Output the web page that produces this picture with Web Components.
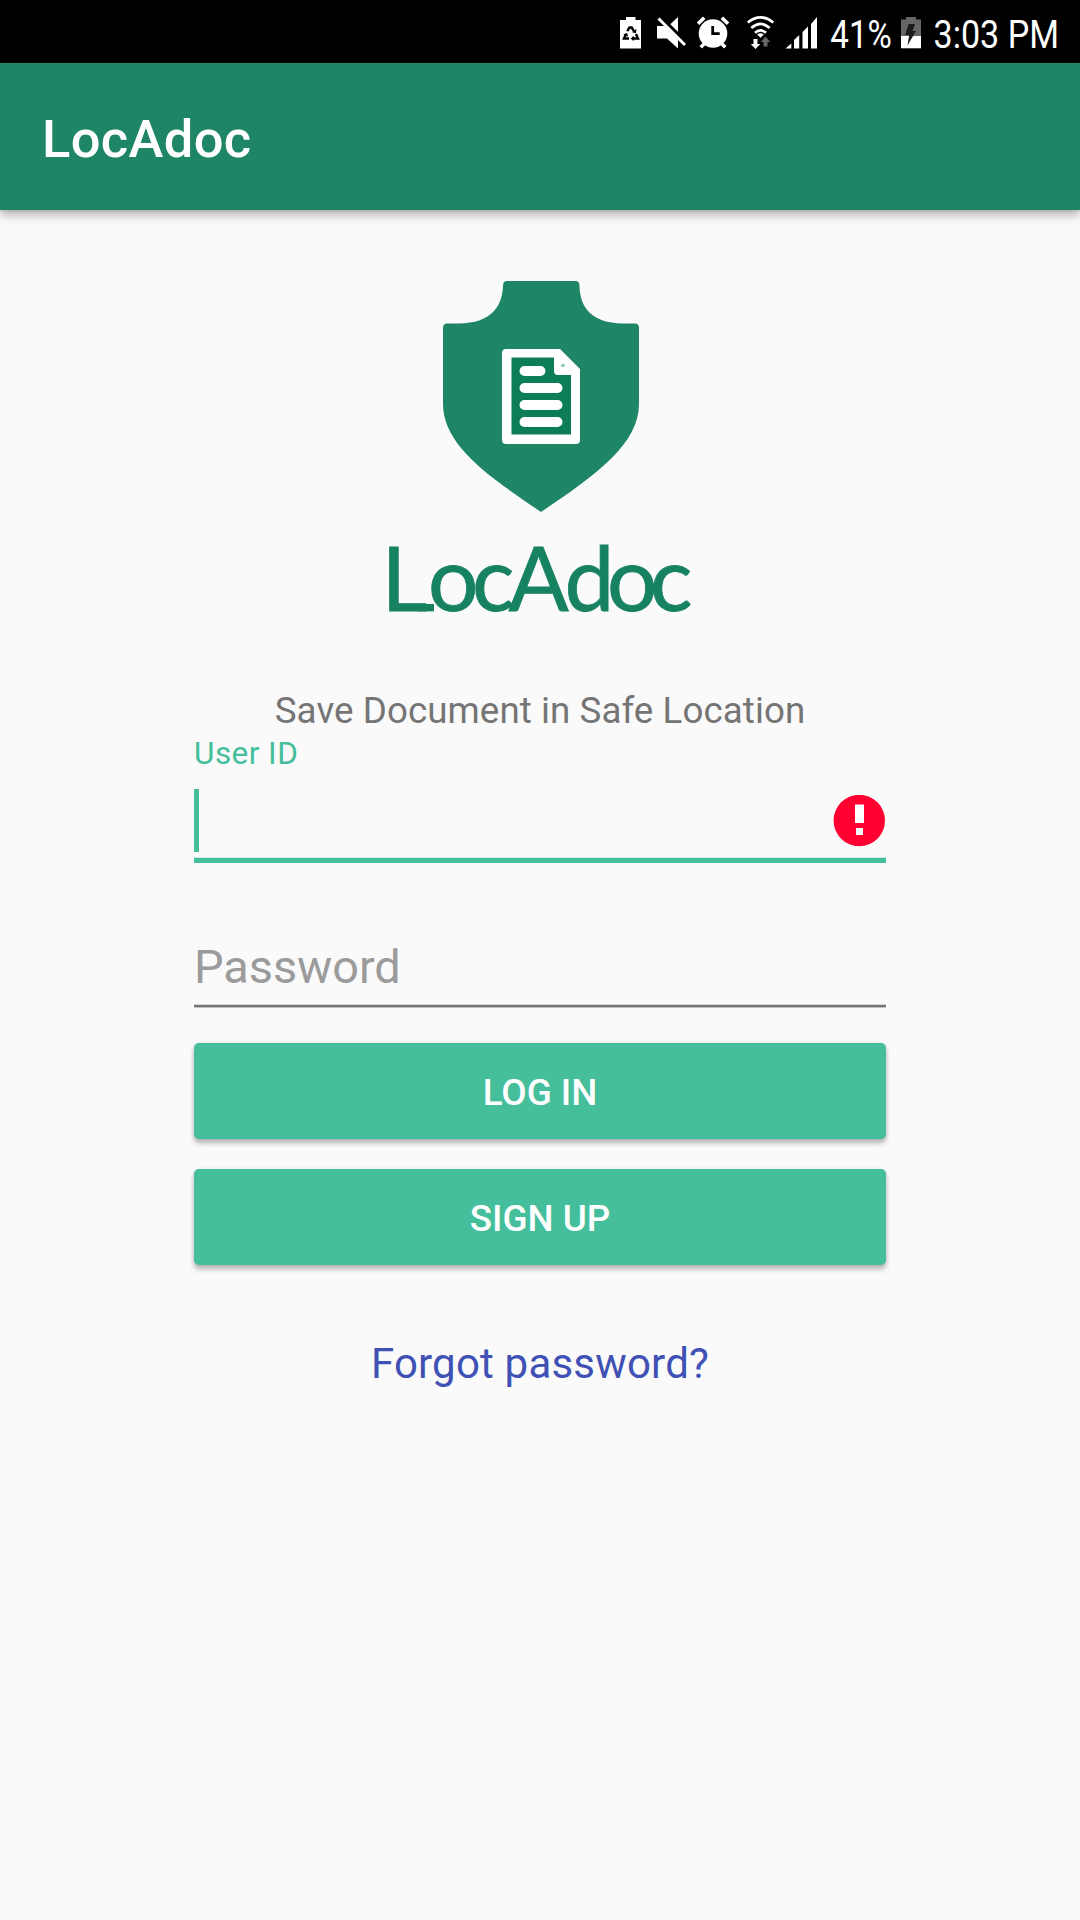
<!DOCTYPE html>
<html lang="en">
<head>
<meta charset="utf-8">
<title>LocAdoc</title>
<style>
html,body{margin:0;padding:0}
body{width:1080px;height:1920px;overflow:hidden;background:#fafafa;font-family:Roboto,"Noto Sans",sans-serif}
</style>
</head>
<body>
<login-screen></login-screen>
<script>
const define = (name, html) => customElements.define(name, class extends HTMLElement {
  connectedCallback() {
    if (this.shadowRoot) return;
    const t = document.createElement('template');
    t.innerHTML = html;
    this.attachShadow({mode: 'open'}).append(t.content.cloneNode(true));
  }
});

define('status-bar', `
<style>
:host{display:flex;align-items:flex-start;justify-content:flex-end;height:63px;background:#000;box-sizing:border-box;padding:14px 20px 0 0}
svg{display:block;flex:none;overflow:visible}
</style>
<svg width="22" height="36" viewBox="620 14 22 36" style="margin-right:14px">
  <path fill="#fff" d="M626 17h9.500v3H641v28.500H620V20h6z"/>
  <g fill="none" stroke="#000" stroke-width="2.400">
    <path d="M627.300 31.200l2.200-3.700h2.200l2.400 3.900"/>
    <path d="M636 34l2 4.500h-5"/>
    <path d="M629 38.500h-5l2-4.500"/>
  </g>
  <path d="M632 32.300l4.100.9.300-4.200zM633.600 35.800v5.400l-2.800-2.700zM623.200 34.600l4-1.700.9 3.800z"/>
</svg>
<svg width="30" height="36" viewBox="656 14 30 36" style="margin-right:11px">
  <path fill="#fff" d="M657 26h7.500l13.500 13.500V48.500L667 38.500H657zM678 17v15.500l-8-8z"/>
  <path stroke="#000" stroke-width="3" d="M661.500 17.500l25 25"/>
  <path stroke="#fff" stroke-width="3" d="M658.500 18.500l26.500 26.500"/>
</svg>
<svg width="32" height="36" viewBox="697 14 32 36" style="margin-right:18px">
  <circle cx="713" cy="33.500" r="14.300" fill="#fff"/>
  <path stroke="#fff" stroke-width="3.600" d="M698 23.800l6.200-6M728 23.800l-6.200-6M704 44l-3.300 3.300M722 44l3.300 3.300"/>
  <path fill="none" stroke="#000" stroke-width="2.800" d="M712.700 26v7.600h7"/>
</svg>
<svg width="28" height="36" viewBox="747 14 28 36" style="margin-right:10px">
  <g fill="none" stroke="#fff" stroke-width="2.700">
    <path d="M747.800 22.500Q760.500 12.300 773.300 22.500"/>
    <path d="M751.300 28Q760.500 19.800 769.700 28"/>
    <path d="M755 32.800Q760.500 28 766 32.800"/>
  </g>
  <path fill="#fff" d="M757.200 34.500q3.300-2.500 6.600 0l-3.300 3.300zM753.500 39h4v5h2.800l-4.800 5-4.800-5h2.800z"/>
  <path fill="#666" d="M763.500 46.500h4V42h2.800l-4.800-5.500-4.800 5.500h2.800z"/>
</svg>
<svg width="32" height="36" viewBox="785 14 32 36" style="margin-right:14px">
  <path fill="#fff" d="M785.500 48.500l5.800-5v5zM794 48.500v-8.500l5.200-5v13.500zM802.500 48.500v-16.500l5.500-5.500v22zM811 48.500v-24.500l6-7v31.500z"/>
</svg>
<svg width="60" height="36" viewBox="831 14 60 36" style="margin-right:10px">
  <text x="830.300" y="48" font-size="39" fill="#fff" textLength="61.500" lengthAdjust="spacingAndGlyphs">41%</text>
</svg>
<svg width="20" height="36" viewBox="901 14 20 36" style="margin-right:14px">
  <path fill="#666" d="M906 17h10v2.500h5V36h-20V19.500h5z"/>
  <path fill="#fff" d="M901 36h20v12.300h-20z"/>
  <path fill="#1c1c1c" d="M908.500 24h6.500l-2.500 7h3.500l-8.500 14.500 1.700-10.500h-4z"/>
</svg>
<svg width="125" height="36" viewBox="935 14 125 36">
  <text x="933.500" y="48" font-size="39" fill="#fff" textLength="125.500" lengthAdjust="spacingAndGlyphs">3:03 PM</text>
</svg>`);

define('app-bar', `
<style>
:host{display:flex;align-items:center;height:147px;box-sizing:border-box;padding:4px 0 0 42px;background:#1e8667;color:#fff;font-size:52.5px;font-weight:500;letter-spacing:.35px;line-height:60px;box-shadow:0 5px 10px rgba(0,0,0,.28),0 1px 4px rgba(0,0,0,.12)}
</style><slot></slot>`);

define('brand-logo', `
<style>:host{display:block;width:320px;height:360px}svg{display:block}</style>
<svg width="320" height="360" viewBox="380 270 320 360">
  <path fill="#1e8667" d="M507 281H576Q579.500 281 579.500 286C580 307 591 323 623 323.500H635Q639 323.500 639 328V404C639 444 596 475 541 512C486 475 443 444 443 404V328Q443 323.500 447 323.500H459C491 323 502 307 503 286Q503 281 507 281z"/>
  <path fill="#fff" d="M506 349h54l20 20v71q0 4-4 4h-70q-4 0-4-4v-87q0-4 4-4z"/>
  <path fill="#0c7d58" d="M511.500 357.500H554V371q0 4 4 4H571V434.500H511.500z"/>
  <circle cx="563" cy="365.500" r="1.800" fill="#8cc5b1"/>
  <path stroke="#fff" stroke-width="10" stroke-linecap="round" d="M524.500 371H540.500M524.500 388H557.500M524.500 405H557.500M524.500 422H557.500"/>
  <rect x="418" y="604" width="16" height="7.400" fill="#178261"/>
  <text y="611" font-family="Lato" font-size="89" fill="#178261" stroke="#178261" stroke-width=".8" x="381.500 428 472 508.500 564.500 607 650">LocAdoc</text>
</svg>`);

define('text-field', `
<style>
:host{display:flex;flex-direction:column;box-sizing:border-box}
.row{display:flex;align-items:center;justify-content:space-between}
:host([focused]){height:133px}
:host([focused]) .label{height:37px;line-height:37px;font-size:31.5px;letter-spacing:.45px;color:#44be9b}
:host([focused]) .row{height:63px;margin-top:17px}
:host([focused]) .line{height:5px;margin-top:5px;border-top:1px solid #d0eee4;background:#44be9b;background-clip:padding-box}
:host(:not([focused])) .label{height:56px;line-height:56px;font-size:46.9px;letter-spacing:-.05px;color:#9b9b9b}
:host(:not([focused])) .line{height:2px;margin-top:9px;background:#737774;background-clip:padding-box;border-top:1px solid #d5d9d6;border-bottom:1px solid #bfc2c0}
:host(:not([focused])) .row{display:none}
.caret{width:5px;height:63px;background:#44be9b}
svg{display:block}
</style>
<div class="label"><slot></slot></div>
<div class="row"><div class="caret"></div>
<svg width="53" height="52" viewBox="0 0 53 52"><circle cx="26.300" cy="25.500" r="25.700" fill="#ff0030"/><path fill="#fff" d="M22 9.500h9v18.500h-9zM23 33h7v7h-7z"/></svg></div>
<div class="line"></div>`);

define('raised-button', `
<style>
:host{display:flex;align-items:center;justify-content:center;height:96px;box-sizing:border-box;padding-top:3px;border-radius:5px;background:#44be9b;color:#fff;font-size:36.75px;font-weight:500;line-height:44px;box-shadow:0 5px 5px rgba(0,0,0,.2),0 1px 4px rgba(0,0,0,.16)}
</style><slot></slot>`);

define('login-screen', `
<style>
:host{display:flex;flex-direction:column;width:1080px;height:1920px;background:#fafafa}
main{display:flex;flex-direction:column;width:692px;margin:60px 0 0 194px}
brand-logo{margin-left:186px}
.tag{height:44px;line-height:44px;margin-top:59px;text-align:center;font-size:36.75px;letter-spacing:.06px;color:#757575}
.user{margin-top:2px}
.pass{margin-top:71px}
.in{margin-top:35px}
.up{margin-top:30px}
.forgot{margin-top:74px;height:50px;line-height:50px;text-align:center;font-size:42px;letter-spacing:.2px;color:#3f51b5}
</style>
<status-bar></status-bar>
<app-bar>LocAdoc</app-bar>
<main>
<brand-logo></brand-logo>
<div class="tag">Save Document in Safe Location</div>
<text-field focused class="user">User ID</text-field>
<text-field class="pass">Password</text-field>
<raised-button class="in">LOG IN</raised-button>
<raised-button class="up">SIGN UP</raised-button>
<div class="forgot">Forgot password?</div>
</main>`);
</script>
</body>
</html>
